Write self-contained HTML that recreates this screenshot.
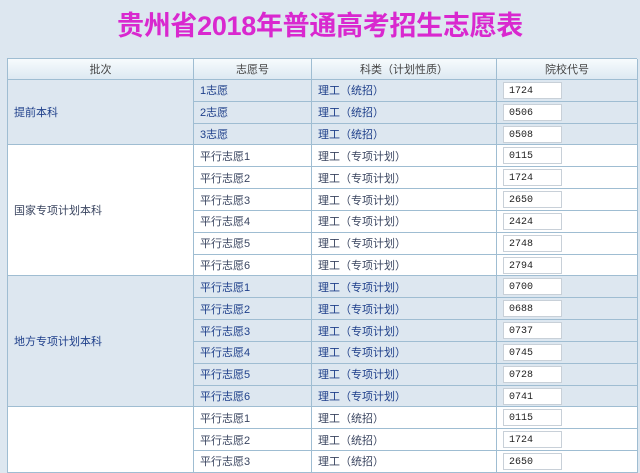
<!DOCTYPE html>
<html><head><meta charset="utf-8"><style>
*{margin:0;padding:0;box-sizing:border-box}
body{width:640px;height:472px;overflow:hidden;background:#dde7f0;font-family:"Liberation Sans","Noto Sans CJK SC",sans-serif;position:relative}
.t{position:absolute;left:0;width:640px;top:8px;text-align:center;font-size:27px;font-weight:bold;color:#d928cf;line-height:36px;letter-spacing:-0.3px}
.g{position:absolute;left:7px;top:58px;width:630px;display:grid;grid-template-columns:186px 118px 185px 141px;grid-template-rows:21px repeat(18,21.83px);border-left:1px solid #9fbdd2;border-top:1px solid #9fbdd2}
.g>div{border-right:1px solid #9fbdd2;border-bottom:1px solid #9fbdd2;font-size:11px;display:flex;align-items:center;padding-left:6px;white-space:nowrap}
.h{background:linear-gradient(#f7fbfd,#dde9f2);justify-content:center;padding-left:0!important;color:#444}
.b{background:#dde7f0;color:#1e3f8a}
.w{background:#fff;color:#3a4560}
.in{display:inline-block;width:59px;height:17px;background:#fff;border:1px solid #c8d0d8;font-family:"Liberation Mono",monospace;font-size:10px;line-height:16px;padding-left:5px;padding-top:1px;color:#222}
</style></head><body>
<div class="t">贵州省2018年普通高考招生志愿表</div>
<div class="g">
<div class="h">批次</div><div class="h">志愿号</div><div class="h">科类（计划性质）</div><div class="h">院校代号</div>
<div class="b" style="grid-row:2/5">提前本科</div>
<div class="b">1志愿</div><div class="b">理工（统招）</div><div class="b"><span class="in">1724</span></div>
<div class="b">2志愿</div><div class="b">理工（统招）</div><div class="b"><span class="in">0506</span></div>
<div class="b">3志愿</div><div class="b">理工（统招）</div><div class="b"><span class="in">0508</span></div>
<div class="w" style="grid-row:5/11">国家专项计划本科</div>
<div class="w">平行志愿1</div><div class="w">理工（专项计划）</div><div class="w"><span class="in">0115</span></div>
<div class="w">平行志愿2</div><div class="w">理工（专项计划）</div><div class="w"><span class="in">1724</span></div>
<div class="w">平行志愿3</div><div class="w">理工（专项计划）</div><div class="w"><span class="in">2650</span></div>
<div class="w">平行志愿4</div><div class="w">理工（专项计划）</div><div class="w"><span class="in">2424</span></div>
<div class="w">平行志愿5</div><div class="w">理工（专项计划）</div><div class="w"><span class="in">2748</span></div>
<div class="w">平行志愿6</div><div class="w">理工（专项计划）</div><div class="w"><span class="in">2794</span></div>
<div class="b" style="grid-row:11/17">地方专项计划本科</div>
<div class="b">平行志愿1</div><div class="b">理工（专项计划）</div><div class="b"><span class="in">0700</span></div>
<div class="b">平行志愿2</div><div class="b">理工（专项计划）</div><div class="b"><span class="in">0688</span></div>
<div class="b">平行志愿3</div><div class="b">理工（专项计划）</div><div class="b"><span class="in">0737</span></div>
<div class="b">平行志愿4</div><div class="b">理工（专项计划）</div><div class="b"><span class="in">0745</span></div>
<div class="b">平行志愿5</div><div class="b">理工（专项计划）</div><div class="b"><span class="in">0728</span></div>
<div class="b">平行志愿6</div><div class="b">理工（专项计划）</div><div class="b"><span class="in">0741</span></div>
<div class="w" style="grid-row:17/20"></div>
<div class="w">平行志愿1</div><div class="w">理工（统招）</div><div class="w"><span class="in">0115</span></div>
<div class="w">平行志愿2</div><div class="w">理工（统招）</div><div class="w"><span class="in">1724</span></div>
<div class="w">平行志愿3</div><div class="w">理工（统招）</div><div class="w"><span class="in">2650</span></div>
</div>
</body></html>
